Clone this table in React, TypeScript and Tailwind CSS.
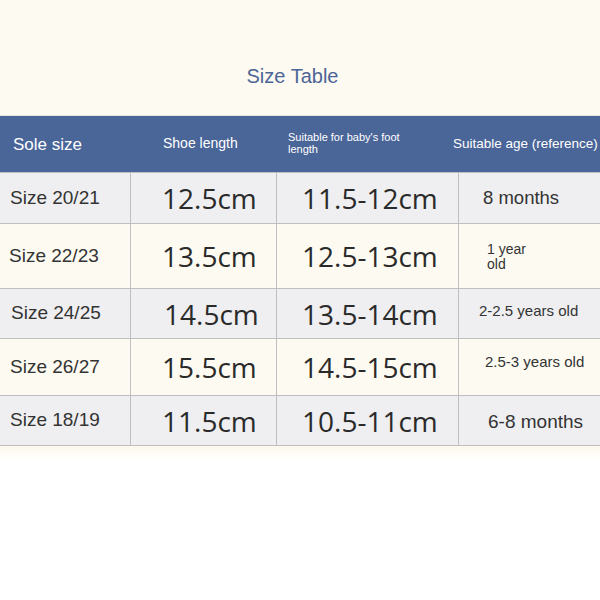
import React from "react";

const sans = { fontFamily: '"Liberation Sans", Arial, sans-serif' };
const num = { fontFamily: '"Open Sans", "Noto Sans", sans-serif' };

type Row = {
  size: string;
  sizePl: string;
  shoe: string;
  shoePl: string;
  foot: string;
  age: React.ReactNode;
  agePl: string;
  h: string;
  bg: string;
};

const rows: Row[] = [
  { size: "Size 20/21", sizePl: "pl-[10px]", shoe: "12.5cm", shoePl: "pl-[31px]", foot: "11.5-12cm", age: <span className="text-[18.5px]">8 months</span>, agePl: "pl-[24px]", h: "h-[51px]", bg: "bg-[#efeff1]" },
  { size: "Size 22/23", sizePl: "pl-[9px]", shoe: "13.5cm", shoePl: "pl-[31px]", foot: "12.5-13cm", age: <span className="text-[14px] leading-[15px] block pt-[2px]">1 year<br />old</span>, agePl: "pl-[28px]", h: "h-[65px]", bg: "bg-[#fdfbf1]" },
  { size: "Size 24/25", sizePl: "pl-[11px]", shoe: "14.5cm", shoePl: "pl-[33px]", foot: "13.5-14cm", age: <span className="text-[15px] block pb-[4px]">2-2.5 years old</span>, agePl: "pl-[20px]", h: "h-[50px]", bg: "bg-[#efeff1]" },
  { size: "Size 26/27", sizePl: "pl-[10px]", shoe: "15.5cm", shoePl: "pl-[31px]", foot: "14.5-15cm", age: <span className="text-[15px] block pb-[10px]">2.5-3 years old</span>, agePl: "pl-[26px]", h: "h-[57px]", bg: "bg-[#fdfbf1]" },
  { size: "Size 18/19", sizePl: "pl-[10px]", shoe: "11.5cm", shoePl: "pl-[31px]", foot: "10.5-11cm", age: <span className="text-[19px] block pt-[3px]">6-8 months</span>, agePl: "pl-[29px]", h: "h-[50px]", bg: "bg-[#efeff1]" },
];

export default function App() {
  return (
    <div className="w-[600px] h-[600px] bg-white overflow-hidden text-[#333333]" style={sans}>
      <div className="h-[115px] bg-[#fdfaf1] flex justify-center pt-[64px] pr-[15px]">
        <div className="text-[20px] leading-[24px] text-[#4d6596]">Size Table</div>
      </div>
      <div className="grid grid-cols-[131px_146px_182px_141px] h-[58px] bg-[#4a6598] text-white border-t border-[#e8e6df] border-b border-b-[#bfbfc2]">
        <div className="flex items-center pl-[13px] text-[17px] pt-[1px]">Sole size</div>
        <div className="flex items-center pl-[32px] text-[14px] pb-[2px]">Shoe length</div>
        <div className="flex items-center pl-[11px] text-[11px] leading-[12px] pb-[2px]">
          <span>Suitable for baby's foot<br />length</span>
        </div>
        <div className="flex items-center pl-[-6px] -ml-[6px] text-[13.5px] whitespace-nowrap">Suitable age (reference)</div>
      </div>
      {rows.map((r) => (
        <div key={r.size} className={`grid grid-cols-[131px_146px_182px_141px] ${r.h} ${r.bg} border-b border-[#bfbfc2]`}>
          <div className={`flex items-center ${r.sizePl} text-[19px] border-r border-[#bfbfc2]`}>{r.size}</div>
          <div className={`flex items-center ${r.shoePl} text-[28px] border-r border-[#bfbfc2] text-[#2a2a2a]`} style={num}>{r.shoe}</div>
          <div className={`flex items-center pl-[25px] text-[28px] border-r border-[#bfbfc2] text-[#2a2a2a]`} style={num}>{r.foot}</div>
          <div className={`flex items-center ${r.agePl}`}>{r.age}</div>
        </div>
      ))}
      <div className="h-[14px] bg-gradient-to-b from-[#fcf8ec] to-white" />
    </div>
  );
}
